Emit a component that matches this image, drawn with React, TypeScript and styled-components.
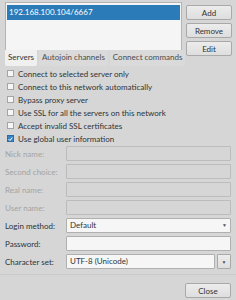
import React from 'react';
import styled, { createGlobalStyle } from 'styled-components';

const GlobalStyle = createGlobalStyle`
  html, body {
    margin: 0;
    padding: 0;
    background: #d6d6d6;
  }
  * {
    box-sizing: border-box;
  }
`;

const Dialog = styled.div`
  width: 236px;
  height: 300px;
  background: #d6d6d6;
  font-family: Lato, 'Noto Sans', sans-serif;
  font-size: 8px;
  color: #2e3436;
  display: flex;
  flex-direction: column;
  overflow: hidden;
`;

const TopRow = styled.div`
  display: flex;
  align-items: flex-start;
  gap: 4px;
  height: 50px;
  padding: 2px 4px 0 5px;
`;

const ServerList = styled.div`
  width: 177px;
  height: 48px;
  background: #f5f5f5;
  border: 1px solid #b4b4b4;
  border-bottom: none;
  padding: 2px 1px 0 1px;
`;

const ServerRow = styled.div<{ $selected?: boolean }>`
  height: 15px;
  line-height: 15px;
  padding-left: 2px;
  background: ${({ $selected }) => ($selected ? '#2b7bb9' : 'transparent')};
  color: ${({ $selected }) => ($selected ? '#fff' : '#2e3436')};
`;

const ButtonColumn = styled.div`
  display: flex;
  flex-direction: column;
  gap: 3px;
  padding-top: 3px;
  position: relative;
  z-index: 1;
`;

const Button = styled.button`
  width: 46px;
  height: 15px;
  padding: 0;
  font-family: inherit;
  font-size: 8px;
  color: #2e3436;
  background: linear-gradient(#ececec, #dedede);
  border: 1px solid #a9a9a9;
  border-radius: 2px;
`;

const Tabs = styled.div`
  display: flex;
  gap: 2px;
  padding-left: 5px;
  height: 16px;
`;

const Tab = styled.div<{ $active?: boolean }>`
  height: 16px;
  line-height: 15px;
  padding: 0 3px;
  background: ${({ $active }) => ($active ? '#f0f0f0' : '#dadada')};
  color: ${({ $active }) => ($active ? '#2e3436' : '#4a4a4a')};
  border-radius: 0 0 2px 2px;
`;

const Checks = styled.div`
  display: flex;
  flex-direction: column;
  padding: 1px 0 0 7px;
`;

const CheckRow = styled.div`
  height: 13px;
  display: flex;
  align-items: center;
  gap: 4px;
`;

const Box = styled.span<{ $checked?: boolean }>`
  width: 7px;
  height: 7px;
  border: 1px solid ${({ $checked }) => ($checked ? '#2b6da8' : '#a4a4a4')};
  background: ${({ $checked }) => ($checked ? '#3b84c4' : '#f6f6f6')};
  display: flex;
  align-items: center;
  justify-content: center;
`;

const Form = styled.div`
  display: grid;
  grid-template-columns: 61px 1fr;
  grid-auto-rows: 15px;
  row-gap: 3px;
  padding: 1px 5px 0 5px;
  align-items: center;
`;

const Label = styled.span<{ $disabled?: boolean }>`
  color: ${({ $disabled }) => ($disabled ? '#a3a3a3' : '#2e3436')};
`;

const Field = styled.div<{ $disabled?: boolean }>`
  height: 15px;
  background: ${({ $disabled }) => ($disabled ? '#d6d6d6' : '#f6f6f6')};
  border: 1px solid ${({ $disabled }) => ($disabled ? '#bcbcbc' : '#b0b0b0')};
  border-radius: 1px;
  padding-left: 3px;
  line-height: 13px;
  display: flex;
  align-items: center;
  justify-content: space-between;
`;

const Arrow = styled.span`
  font-size: 5px;
  color: #555;
  padding-right: 3px;
`;

const ComboRow = styled.div`
  display: flex;
  gap: 2px;
  height: 15px;
`;

const ComboEntry = styled(Field)`
  flex: 1;
`;

const ArrowButton = styled.div`
  width: 14px;
  height: 15px;
  background: linear-gradient(#ececec, #dedede);
  border: 1px solid #a9a9a9;
  border-radius: 1px;
  display: flex;
  align-items: center;
  justify-content: center;
  font-size: 5px;
  color: #555;
`;

const Footer = styled.div`
  margin-top: 5px;
  border-top: 1px solid #cacaca;
  display: flex;
  justify-content: flex-end;
  padding: 8px 5px 0 0;
`;

const checks = [
  { label: 'Connect to selected server only', checked: false },
  { label: 'Connect to this network automatically', checked: false },
  { label: 'Bypass proxy server', checked: false },
  { label: 'Use SSL for all the servers on this network', checked: false },
  { label: 'Accept invalid SSL certificates', checked: false },
  { label: 'Use global user information', checked: true },
];

const userFields = ['Nick name:', 'Second choice:', 'Real name:', 'User name:'];

export default function App() {
  return (
    <Dialog>
      <GlobalStyle />
      <TopRow>
        <ServerList>
          <ServerRow $selected>192.168.100.104/6667</ServerRow>
        </ServerList>
        <ButtonColumn>
          <Button>Add</Button>
          <Button>Remove</Button>
          <Button>Edit</Button>
        </ButtonColumn>
      </TopRow>
      <Tabs>
        <Tab $active>Servers</Tab>
        <Tab>Autojoin channels</Tab>
        <Tab>Connect commands</Tab>
      </Tabs>
      <Checks>
        {checks.map((c) => (
          <CheckRow key={c.label}>
            <Box $checked={c.checked}>
              {c.checked && (
                <svg width="6" height="6" viewBox="0 0 6 6">
                  <path d="M0.8 3.2 L2.4 4.8 L5.2 1.2" stroke="#fff" strokeWidth="1.2" fill="none" />
                </svg>
              )}
            </Box>
            <span>{c.label}</span>
          </CheckRow>
        ))}
      </Checks>
      <Form>
        {userFields.map((f) => (
          <React.Fragment key={f}>
            <Label $disabled>{f}</Label>
            <Field $disabled />
          </React.Fragment>
        ))}
        <Label>Login method:</Label>
        <Field>
          <span>Default</span>
          <Arrow>▼</Arrow>
        </Field>
        <Label>Password:</Label>
        <Field />
        <Label>Character set:</Label>
        <ComboRow>
          <ComboEntry>UTF-8 (Unicode)</ComboEntry>
          <ArrowButton>▼</ArrowButton>
        </ComboRow>
      </Form>
      <Footer>
        <Button>Close</Button>
      </Footer>
    </Dialog>
  );
}
